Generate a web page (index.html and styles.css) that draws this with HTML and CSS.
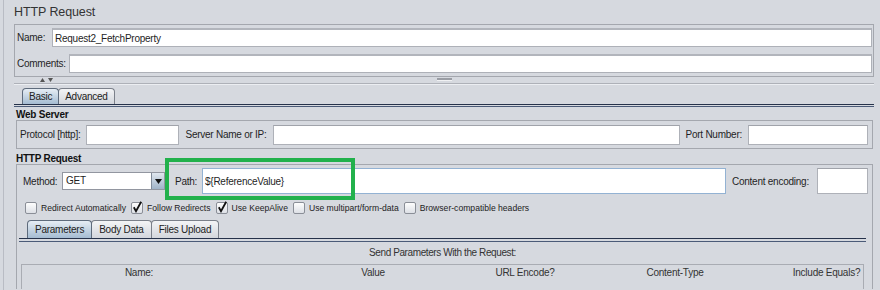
FILE: index.html
```html
<!DOCTYPE html>
<html lang="en">
<head>
  <meta charset="UTF-8">
  <title>HTTP Request</title>
  <link rel="stylesheet" href="styles.css">
</head>
<body>
  <div class="page">
    <div class="title">HTTP Request</div>

    <div class="name-panel">
      <div class="field-row">
        <span class="lbl w-name">Name:</span>
        <input class="field grow" type="text" value="Request2_FetchProperty">
      </div>
      <div class="field-row">
        <span class="lbl w-comments">Comments:</span>
        <input class="field grow" type="text" value="">
      </div>
    </div>

    <div class="splitter">
      <svg class="arrows" width="13" height="4" viewBox="0 0 13 4">
        <path d="M0 4 L2.5 0 L5 4 Z" fill="#555"/>
        <path d="M8 0 L13 0 L10.5 4 Z" fill="#555"/>
      </svg>
      <span class="grip"></span>
      <span></span>
    </div>

    <div class="tabstrip">
      <div class="tab selected">Basic</div>
      <div class="tab">Advanced</div>
    </div>
    <div class="tabline"></div>

    <div class="tab-body">
      <div class="group-title">Web Server</div>
      <div class="panel ws-panel">
        <span class="lbl">Protocol [http]:</span>
        <input class="field w-protocol" type="text">
        <span class="lbl">Server Name or IP:</span>
        <input class="field grow" type="text">
        <span class="lbl">Port Number:</span>
        <input class="field w-port" type="text">
      </div>

      <div class="group-title second">HTTP Request</div>
      <div class="panel http-panel">
        <div class="method-row">
          <span class="lbl w-method">Method:</span>
          <div class="combo">
            <span class="combo-value">GET</span>
            <span class="combo-btn">
              <svg width="7" height="5" viewBox="0 0 7 5"><path d="M0 0 L7 0 L3.5 5 Z" fill="#111"/></svg>
            </span>
          </div>
          <span class="lbl w-path">Path:</span>
          <input class="field tall focused grow" type="text" value="${ReferenceValue}">
          <span class="lbl w-encoding">Content encoding:</span>
          <input class="field tall w-encoding-input" type="text">
        </div>

        <div class="check-row">
          <span class="check"></span><span class="check-label">Redirect Automatically</span>
          <span class="check">
            <svg width="12" height="12" viewBox="0 0 12 12"><path d="M2.8 6.2 L5 10.2 L10.2 0.8" fill="none" stroke="#111" stroke-width="1.8"/></svg>
          </span><span class="check-label">Follow Redirects</span>
          <span class="check">
            <svg width="12" height="12" viewBox="0 0 12 12"><path d="M2.8 6.2 L5 10.2 L10.2 0.8" fill="none" stroke="#111" stroke-width="1.8"/></svg>
          </span><span class="check-label">Use KeepAlive</span>
          <span class="check"></span><span class="check-label">Use multipart/form-data</span>
          <span class="check"></span><span class="check-label">Browser-compatible headers</span>
        </div>

        <div class="tabstrip param-tabs">
          <div class="tab selected">Parameters</div>
          <div class="tab">Body Data</div>
          <div class="tab">Files Upload</div>
        </div>
        <div class="tabline param-line"></div>

        <div class="send-title">Send Parameters With the Request:</div>
        <div class="param-table">
          <div class="th">Name:</div>
          <div class="th">Value</div>
          <div class="th">URL Encode?</div>
          <div class="th">Content-Type</div>
          <div class="th">Include Equals?</div>
        </div>

        <div class="highlight"></div>
      </div>
    </div>
  </div>
</body>
</html>
```

FILE: styles.css
```css
body {
  margin: 0;
  width: 880px;
  height: 290px;
  overflow: hidden;
  background-color: #d6d9df;
  font-family: "Liberation Sans", Arial, sans-serif;
  font-size: 10px;
  letter-spacing: -0.25px;
  color: #1f1f1f;
}
.page {
  margin-left: 3px;
  height: 290px;
  box-sizing: border-box;
  border-left: 1px solid #b9bcc4;
  padding: 0 6px 0 10px;
}
.title {
  height: 24px;
  line-height: 24px;
  font-size: 12.5px;
  letter-spacing: -0.1px;
  color: #333;
}
.lbl {
  white-space: nowrap;
}
.field {
  box-sizing: border-box;
  height: 20px;
  margin: 0;
  padding: 0 2px;
  border: 1px solid #aeb1b8;
  border-top-color: #a0a3aa;
  background-color: white;
  font-family: inherit;
  font-size: 10px;
  letter-spacing: -0.25px;
  color: #1f1f1f;
  outline: none;
}
.field.tall {
  height: 26px;
}
.field.focused {
  border-color: #93b2d3;
}
.grow {
  flex: 1;
  min-width: 0;
}

/* name / comments */
.name-panel {
  border: 1px solid #a4a7ae;
  padding: 3px 1px 3px 2px;
  display: flex;
  flex-direction: column;
  gap: 7px;
}
.field-row {
  display: flex;
  align-items: center;
  height: 19px;
}
.field-row .field {
  height: 19px;
  border-top: 2px solid #b2b5bc;
}
.w-name {
  width: 35px;
}
.w-comments {
  width: 52px;
}

/* splitter */
.splitter {
  display: grid;
  grid-template-columns: 1fr auto 1fr;
  height: 6px;
  border-bottom: 1px solid #aeb1b8;
  box-shadow: 0 1px 0 #eceef2;
  margin-bottom: 4px;
}
.arrows {
  margin: 1px 0 0 26px;
}
.grip {
  width: 15px;
  height: 2px;
  margin-top: 1px;
  background-color: #9a9da4;
  border-bottom: 1px solid #f0f1f3;
}

/* tabs */
.tabstrip {
  display: flex;
  align-items: flex-end;
  height: 16px;
  padding-left: 8px;
}
.tab {
  height: 15px;
  line-height: 15px;
  padding: 0 6px;
  border: 1px solid #7b808a;
  border-bottom: none;
  border-radius: 4px 4px 0 0;
  background: linear-gradient(#f3f4f6, #d3d6dc);
  color: #222;
}
.tab + .tab {
  margin-left: -1px;
}
.tab.selected {
  border-color: #5e6b7c;
  background: linear-gradient(#e6edf4, #a5bcd2);
  position: relative;
  z-index: 1;
}
.tabline {
  height: 1px;
  border-top: 1px solid #26324a;
  border-bottom: 1px solid #4b5b78;
}

.tab-body {
  padding: 0 1px 0 2px;
}
.group-title {
  height: 13px;
  line-height: 15px;
  font-weight: bold;
  color: #111;
}
.group-title.second {
  padding-top: 2px;
}
.panel {
  border: 1px solid #a4a7ae;
}
.ws-panel {
  display: flex;
  align-items: center;
  gap: 6px;
  height: 27px;
  padding: 0 4px 0 3px;
}
.w-protocol {
  width: 93px;
}
.w-port {
  width: 120px;
}

/* http request */
.http-panel {
  position: relative;
  padding: 3px 4px 0 0;
  border-bottom: none;
}
.method-row {
  display: flex;
  align-items: center;
  height: 26px;
  padding-left: 6px;
}
.w-method {
  width: 39px;
}
.combo {
  display: flex;
  box-sizing: border-box;
  width: 103px;
  height: 18px;
  border: 1px solid #9296a0;
  background-color: white;
}
.combo-value {
  flex: 1;
  line-height: 16px;
  padding-left: 3px;
}
.combo-btn {
  display: flex;
  align-items: center;
  justify-content: center;
  width: 12px;
  border-left: 1px solid #7f8a99;
  background: linear-gradient(#dfe6ee, #9fb3c8);
}
.w-path {
  width: 27px;
  margin-left: 10px;
}
.w-encoding {
  width: 79px;
  margin: 0 6px;
}
.w-encoding-input {
  width: 51px;
}

.check-row {
  display: flex;
  align-items: center;
  height: 19px;
  margin-top: 4px;
  padding-left: 8px;
  font-size: 8.6px;
  letter-spacing: 0;
  color: #222;
}
.check {
  box-sizing: border-box;
  width: 12px;
  height: 12px;
  border: 1px solid #8a8e97;
  border-radius: 2px;
  background: linear-gradient(#fdfdfd, #dde0e6);
  position: relative;
}
.check svg {
  position: absolute;
  left: -1px;
  top: -2px;
}
.check-label {
  margin: 0 5px 0 4px;
}

.param-tabs {
  height: 18px;
  margin: 3px 2px 0 2px;
}
.param-tabs .tab {
  height: 17px;
  line-height: 17px;
  padding: 0 7px;
}
.param-line {
  height: 2px;
  margin: 0 2px;
}
.send-title {
  height: 22px;
  line-height: 22px;
  text-align: center;
  letter-spacing: -0.4px;
  color: #333;
}
.param-table {
  display: grid;
  grid-template-columns: 234px 234px 70px 230px 1fr;
  margin: 0 4px;
  border: 1px solid #a9acb3;
  border-bottom: none;
  height: 24px;
}
.th {
  height: 16px;
  line-height: 16px;
  text-align: center;
  white-space: nowrap;
  color: #333;
}

.highlight {
  position: absolute;
  left: 148px;
  top: -7px;
  box-sizing: border-box;
  width: 190px;
  height: 42px;
  border: 4px solid #22b14c;
}
```
